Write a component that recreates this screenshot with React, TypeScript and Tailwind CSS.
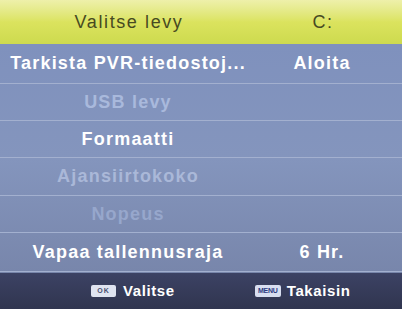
const rows = [
  { label: "Tarkista PVR-tiedostoj...", value: "Aloita", tone: "text-white", h: "h-[40px]" },
  { label: "USB levy", value: "", tone: "text-[#a9b9dc]", h: "h-[37px]" },
  { label: "Formaatti", value: "", tone: "text-white", h: "h-[37px]" },
  { label: "Ajansiirtokoko", value: "", tone: "text-[#aab8d8]", h: "h-[38px]" },
  { label: "Nopeus", value: "", tone: "text-[#97a7cc]", h: "h-[37px]" },
  { label: "Vapaa tallennusraja", value: "6 Hr.", tone: "text-white", h: "h-[39px]" },
];

export default function App() {
  return (
    <div
      className="w-[402px] h-[309px] overflow-hidden flex flex-col bg-[#8192bb]"
      style={{ fontFamily: '"Liberation Sans", Arial, sans-serif' }}
    >
      {/* Header */}
      <div className="h-[44px] flex items-center bg-gradient-to-b from-[#eef0aa] via-[#dbe35e] to-[#cdda4e] text-[#474a22] text-[18px] tracking-[1.6px]">
        <div className="w-[258px] text-center">Valitse levy</div>
        <div className="flex-1 text-center pr-[14px]">C:</div>
      </div>

      {/* Menu rows */}
      <div className="flex-1 flex flex-col bg-gradient-to-b from-[#7f91bd] via-[#8495bd] to-[#7886ab]">
        {rows.map((r) => (
          <div
            key={r.label}
            className={`${r.h} flex items-center border-b border-[#a3b0cf] font-bold text-[18px] tracking-[1.2px] ${r.tone}`}
          >
            <div className="w-[256px] text-center whitespace-nowrap">{r.label}</div>
            <div className="flex-1 text-center text-white pr-[14px]">{r.value}</div>
          </div>
        ))}
      </div>

      {/* Footer */}
      <div className="h-[36px] flex items-center pl-[91px] gap-[80px] bg-gradient-to-b from-[#3c4264] to-[#30354f] text-white font-bold text-[15px] tracking-[0.6px]">
        <div className="flex items-center gap-[7px]">
          <span className="w-[25px] h-[12px] rounded-[2px] bg-[#dfe3f0] text-[#4a5070] text-[7px] font-bold flex items-center justify-center tracking-[1px]">
            OK
          </span>
          <span>Valitse</span>
        </div>
        <div className="flex items-center gap-[6px]">
          <span className="w-[26px] h-[12px] rounded-[2px] bg-[#d8def0] text-[#2c3a80] text-[7px] font-bold flex items-center justify-center tracking-[-0.3px]">
            MENU
          </span>
          <span>Takaisin</span>
        </div>
      </div>
    </div>
  );
}
